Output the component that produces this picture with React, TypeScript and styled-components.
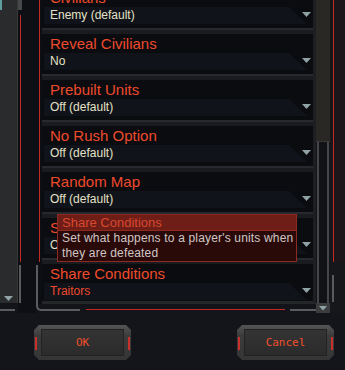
import React from 'react';
import styled, { createGlobalStyle } from 'styled-components';

const Global = createGlobalStyle`
  html, body { margin: 0; padding: 0; background: #121419; }
  body { width: 345px; height: 370px; overflow: hidden; font-family: "Liberation Sans", Arial, sans-serif; }
  * { box-sizing: border-box; }
`;

const Page = styled.div`
  width: 345px;
  height: 370px;
  display: flex;
  flex-direction: column;
  background: #121419;
  overflow: hidden;
`;

const Main = styled.div`
  position: relative;
  height: 313px;
  display: grid;
  grid-template-columns: 18px 18px 280px 14px 15px;
`;

/* left rail (neighbouring panel scrollbar) */
const Rail = styled.div`
  display: flex;
  flex-direction: column;
`;
const RailTrack = styled.div`
  flex: 1;
  position: relative;
  background: #2a2b2d;
  border-right: 1px solid #37383a;
  display: flex;
  align-items: flex-end;
  justify-content: center;
  padding-bottom: 2px;
  &::before {
    content: "";
    position: absolute;
    left: 0;
    top: 0;
    width: 2px;
    height: 10px;
    background: #5e9d9b;
  }
`;
const RailFoot = styled.div`
  height: 8px;
  margin: 0 3px 2px 0;
  border-bottom: 2px solid #5a5c5e;
`;

const Arrow = styled.span`
  display: block;
  width: 9px;
  height: 5px;
  background: #8fa2a5;
  clip-path: polygon(0 0, 100% 0, 50% 100%);
  flex: none;
`;

/* gutter */
const Gutter = styled.div`
  display: flex;
  flex-direction: column;
  background: #0d0f14;
`;
const GutterCap = styled.div`
  width: 4px;
  height: 10px;
  background: #47484a;
`;
const GutterRed = styled.div`
  margin: 5px 0 0 2px;
  height: 247px;
  border-left: 1px solid #c42a24;
`;
const GutterBracket = styled.div`
  margin: 3px 0 0 1px;
  width: 2px;
  height: 38px;
  background: #595b5d;
`;

/* list */
const ListCol = styled.div`
  display: flex;
  flex-direction: column;
`;
const ListTop = styled.div`
  display: flex;
  height: 304px;
`;
const EdgeCol = styled.div`
  width: 6px;
  display: flex;
  flex-direction: column;
  background: #0c0e13;
`;
const RedEdge = styled.div`
  height: 262px;
  margin-left: 3px;
  border-left: 1px solid #c42a24;
`;
const GrayEdge = styled.div`
  flex: 1;
  margin-top: 3px;
  border-left: 2px solid #595b5d;
`;
const Rows = styled.div`
  flex: 1;
  overflow: hidden;
  background: #0b0c10;
  border-right: 3px solid #1c1e22;
  border-bottom: 3px solid #24262a;
`;
const RowsInner = styled.div`
  margin-top: -12px;
`;
const Row = styled.div`
  height: 46px;
  padding: 0 0 6px 0;
  background: linear-gradient(
    to bottom,
    #0b0c10 40px,
    #27292e 40px,
    #27292e 42px,
    #191b1f 42px
  );
`;
const Label = styled.div`
  height: 18px;
  padding: 1px 0 0 8px;
  font-size: 15px;
  line-height: 17px;
  color: #ee4a2c;
  white-space: nowrap;
`;
const ValueRow = styled.div`
  display: flex;
  align-items: flex-start;
  padding: 1px 0 0 2px;
`;
const ValueBox = styled.div<{ $hot?: boolean }>`
  width: 263px;
  height: 17px;
  padding-left: 6px;
  background: #10131a;
  clip-path: polygon(0 0, calc(100% - 18px) 0, 100% 100%, 0 100%);
  font-size: 12px;
  line-height: 17px;
  color: ${(p) => (p.$hot ? '#ee4a2c' : '#e4e1c6')};
  white-space: nowrap;
`;
const RowArrow = styled(Arrow)`
  margin: 5px 0 0 -5px;
`;

const ListFoot = styled.div`
  flex: 1;
  display: flex;
  align-items: flex-start;
`;
const FootCorner = styled.div`
  width: 44px;
  height: 7px;
  border-left: 2px solid #595b5d;
  border-bottom: 2px solid #595b5d;
  border-bottom-left-radius: 5px;
`;
const FootRed = styled.div`
  width: 199px;
  height: 1px;
  margin: 5px 0 0 6px;
  background: #c42a24;
`;
const FootGray = styled.div`
  flex: 1;
  height: 2px;
  margin: 5px 0 0 5px;
  background: #595b5d;
`;

/* right scrollbar */
const Scroll = styled.div`
  display: flex;
  flex-direction: column;
`;
const Thumb = styled.div`
  height: 142px;
  background: #2a2825;
  border-bottom: 1px solid #3a3835;
`;
const Track = styled.div`
  flex: 1;
  margin: 0 1px;
  border-left: 2px solid #44464a;
  border-right: 2px solid #44464a;
  background: #101215;
`;
const ScrollBtn = styled.div`
  height: 10px;
  background: #3b3c3e;
  display: flex;
  align-items: center;
  justify-content: center;
`;

/* right strip */
const Strip = styled.div`
  display: flex;
  flex-direction: column;
  background: #15171b;
`;
const StripTop = styled.div`
  height: 262px;
  margin-left: 3px;
  border-left: 1px solid #c42a24;
  background: #1c1519;
`;
const StripBottom = styled.div`
  height: 27px;
  margin: 13px 0 0 2px;
  border-left: 2px solid #595b5d;
`;

/* tooltip */
const Tooltip = styled.div`
  position: absolute;
  left: 57px;
  top: 214px;
  width: 240px;
  border: 1px solid #8e2a22;
  background: #2a0a09;
`;
const TipTitle = styled.div`
  height: 16px;
  padding-left: 4px;
  background: #6f1d17;
  border-bottom: 1px solid #8e2a22;
  font-size: 13px;
  line-height: 15px;
  color: #d8492f;
`;
const TipBody = styled.div`
  padding: 0 4px;
  height: 30px;
  font-size: 12px;
  line-height: 15px;
  letter-spacing: 0.17px;
  color: #cfc7c5;
  white-space: nowrap;
`;

/* footer */
const Footer = styled.div`
  flex: 1;
  display: flex;
  justify-content: space-between;
  align-items: flex-start;
  padding: 12px 11px 0 34px;
  background: #13151a;
`;
const Btn = styled.button`
  position: relative;
  width: 97px;
  height: 35px;
  padding: 4px 7px;
  border: none;
  background: linear-gradient(#555555, #3c3c3c 30%, #353535);
  clip-path: polygon(5px 0, calc(100% - 5px) 0, 100% 5px, 100% calc(100% - 5px), calc(100% - 5px) 100%, 5px 100%, 0 calc(100% - 5px), 0 5px);
  cursor: pointer;
  &::before,
  &::after {
    content: "";
    position: absolute;
    top: 12px;
    width: 2px;
    height: 13px;
    background: #c8302a;
  }
  &::before { left: 1px; }
  &::after { right: 1px; }
`;
const Face = styled.span`
  display: flex;
  align-items: center;
  justify-content: center;
  width: 100%;
  height: 100%;
  background: linear-gradient(#343434, #2b2b2b);
  border: 1px solid #222;
  font-family: "DejaVu Sans Mono", "Liberation Mono", monospace;
  font-size: 11px;
  color: #f0502a;
`;

type Item = { label: string; value: string; hot?: boolean };
const items: Item[] = [
  { label: 'Civilians', value: 'Enemy (default)' },
  { label: 'Reveal Civilians', value: 'No' },
  { label: 'Prebuilt Units', value: 'Off (default)' },
  { label: 'No Rush Option', value: 'Off (default)' },
  { label: 'Random Map', value: 'Off (default)' },
  { label: 'Shared Vision', value: 'Off (default)' },
  { label: 'Share Conditions', value: 'Traitors', hot: true },
];

export default function App() {
  return (
    <Page>
      <Global />
      <Main>
        <Rail>
          <RailTrack>
            <Arrow />
          </RailTrack>
          <RailFoot />
        </Rail>
        <Gutter>
          <GutterCap />
          <GutterRed />
          <GutterBracket />
        </Gutter>
        <ListCol>
          <ListTop>
            <EdgeCol>
              <RedEdge />
              <GrayEdge />
            </EdgeCol>
            <Rows>
              <RowsInner>
                {items.map((it) => (
                  <Row key={it.label}>
                    <Label>{it.label}</Label>
                    <ValueRow>
                      <ValueBox $hot={it.hot}>{it.value}</ValueBox>
                      <RowArrow />
                    </ValueRow>
                  </Row>
                ))}
              </RowsInner>
            </Rows>
          </ListTop>
          <ListFoot>
            <FootCorner />
            <FootRed />
            <FootGray />
          </ListFoot>
        </ListCol>
        <Scroll>
          <Thumb />
          <Track />
          <ScrollBtn>
            <Arrow />
          </ScrollBtn>
        </Scroll>
        <Strip>
          <StripTop />
          <StripBottom />
        </Strip>
        <Tooltip>
          <TipTitle>Share Conditions</TipTitle>
          <TipBody>
            Set what happens to a player's units when
            <br />
            they are defeated
          </TipBody>
        </Tooltip>
      </Main>
      <Footer>
        <Btn>
          <Face>OK</Face>
        </Btn>
        <Btn>
          <Face>Cancel</Face>
        </Btn>
      </Footer>
    </Page>
  );
}
